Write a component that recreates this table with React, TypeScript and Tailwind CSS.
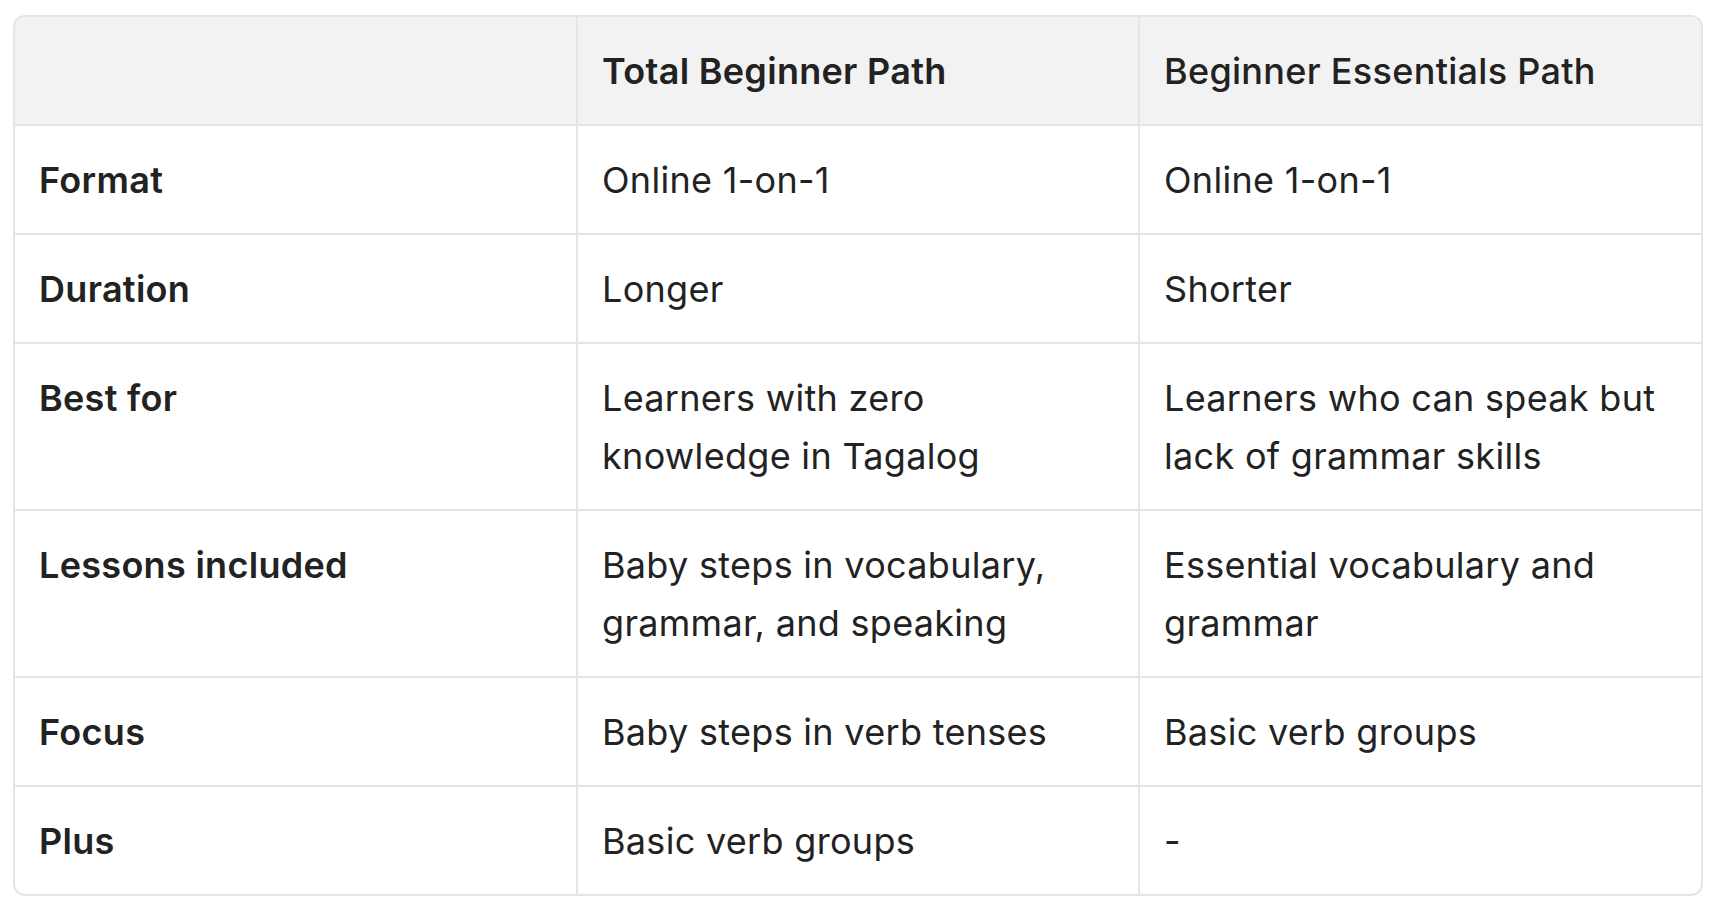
import React from "react";

const rows = [
  { label: "Format", total: ["Online 1-on-1"], essentials: ["Online 1-on-1"] },
  { label: "Duration", total: ["Longer"], essentials: ["Shorter"] },
  {
    label: "Best for",
    total: ["Learners with zero", "knowledge in Tagalog"],
    essentials: ["Learners who can speak but", "lack of grammar skills"],
  },
  {
    label: "Lessons included",
    total: ["Baby steps in vocabulary,", "grammar, and speaking"],
    essentials: ["Essential vocabulary and", "grammar"],
  },
  { label: "Focus", total: ["Baby steps in verb tenses"], essentials: ["Basic verb groups"] },
  { label: "Plus", total: ["Basic verb groups"], essentials: ["-"] },
];

const cell = "pt-[25px] pb-[24px] px-[24px] align-top text-left";

const Lines = ({ lines }: { lines: string[] }) => (
  <>
    {lines.map((l, i) => (
      <div key={i}>{l}</div>
    ))}
  </>
);

export default function App() {
  return (
    <div className="min-h-screen bg-white pl-[13px] pt-[15px] font-['Inter',sans-serif] text-[36px] leading-[58px] tracking-[0.3px] text-[#222222]">
      <div className="w-[1690px] overflow-hidden rounded-[12px] border-2 border-[#e5e5e5]">
        <table className="w-full table-fixed border-collapse">
          <thead>
            <tr className="bg-[#f2f2f2]">
              <th className={`${cell} border-r-2 border-b-2 border-[#e5e5e5]`}></th>
              <th className={`${cell} border-r-2 border-b-2 border-[#e5e5e5] font-semibold`}>
                Total Beginner Path
              </th>
              <th className={`${cell} border-b-2 border-[#e5e5e5] font-medium`}>
                Beginner Essentials Path
              </th>
            </tr>
          </thead>
          <tbody>
            {rows.map((r, i) => {
              const last = i === rows.length - 1;
              return (
                <tr key={r.label} className={last ? "" : "border-b-2 border-[#e5e5e5]"}>
                  <td className={`${cell} border-r-2 border-[#e5e5e5] font-semibold`}>
                    {r.label}
                  </td>
                  <td className={`${cell} border-r-2 border-[#e5e5e5]`}>
                    <Lines lines={r.total} />
                  </td>
                  <td className={cell}>
                    <Lines lines={r.essentials} />
                  </td>
                </tr>
              );
            })}
          </tbody>
        </table>
      </div>
    </div>
  );
}
